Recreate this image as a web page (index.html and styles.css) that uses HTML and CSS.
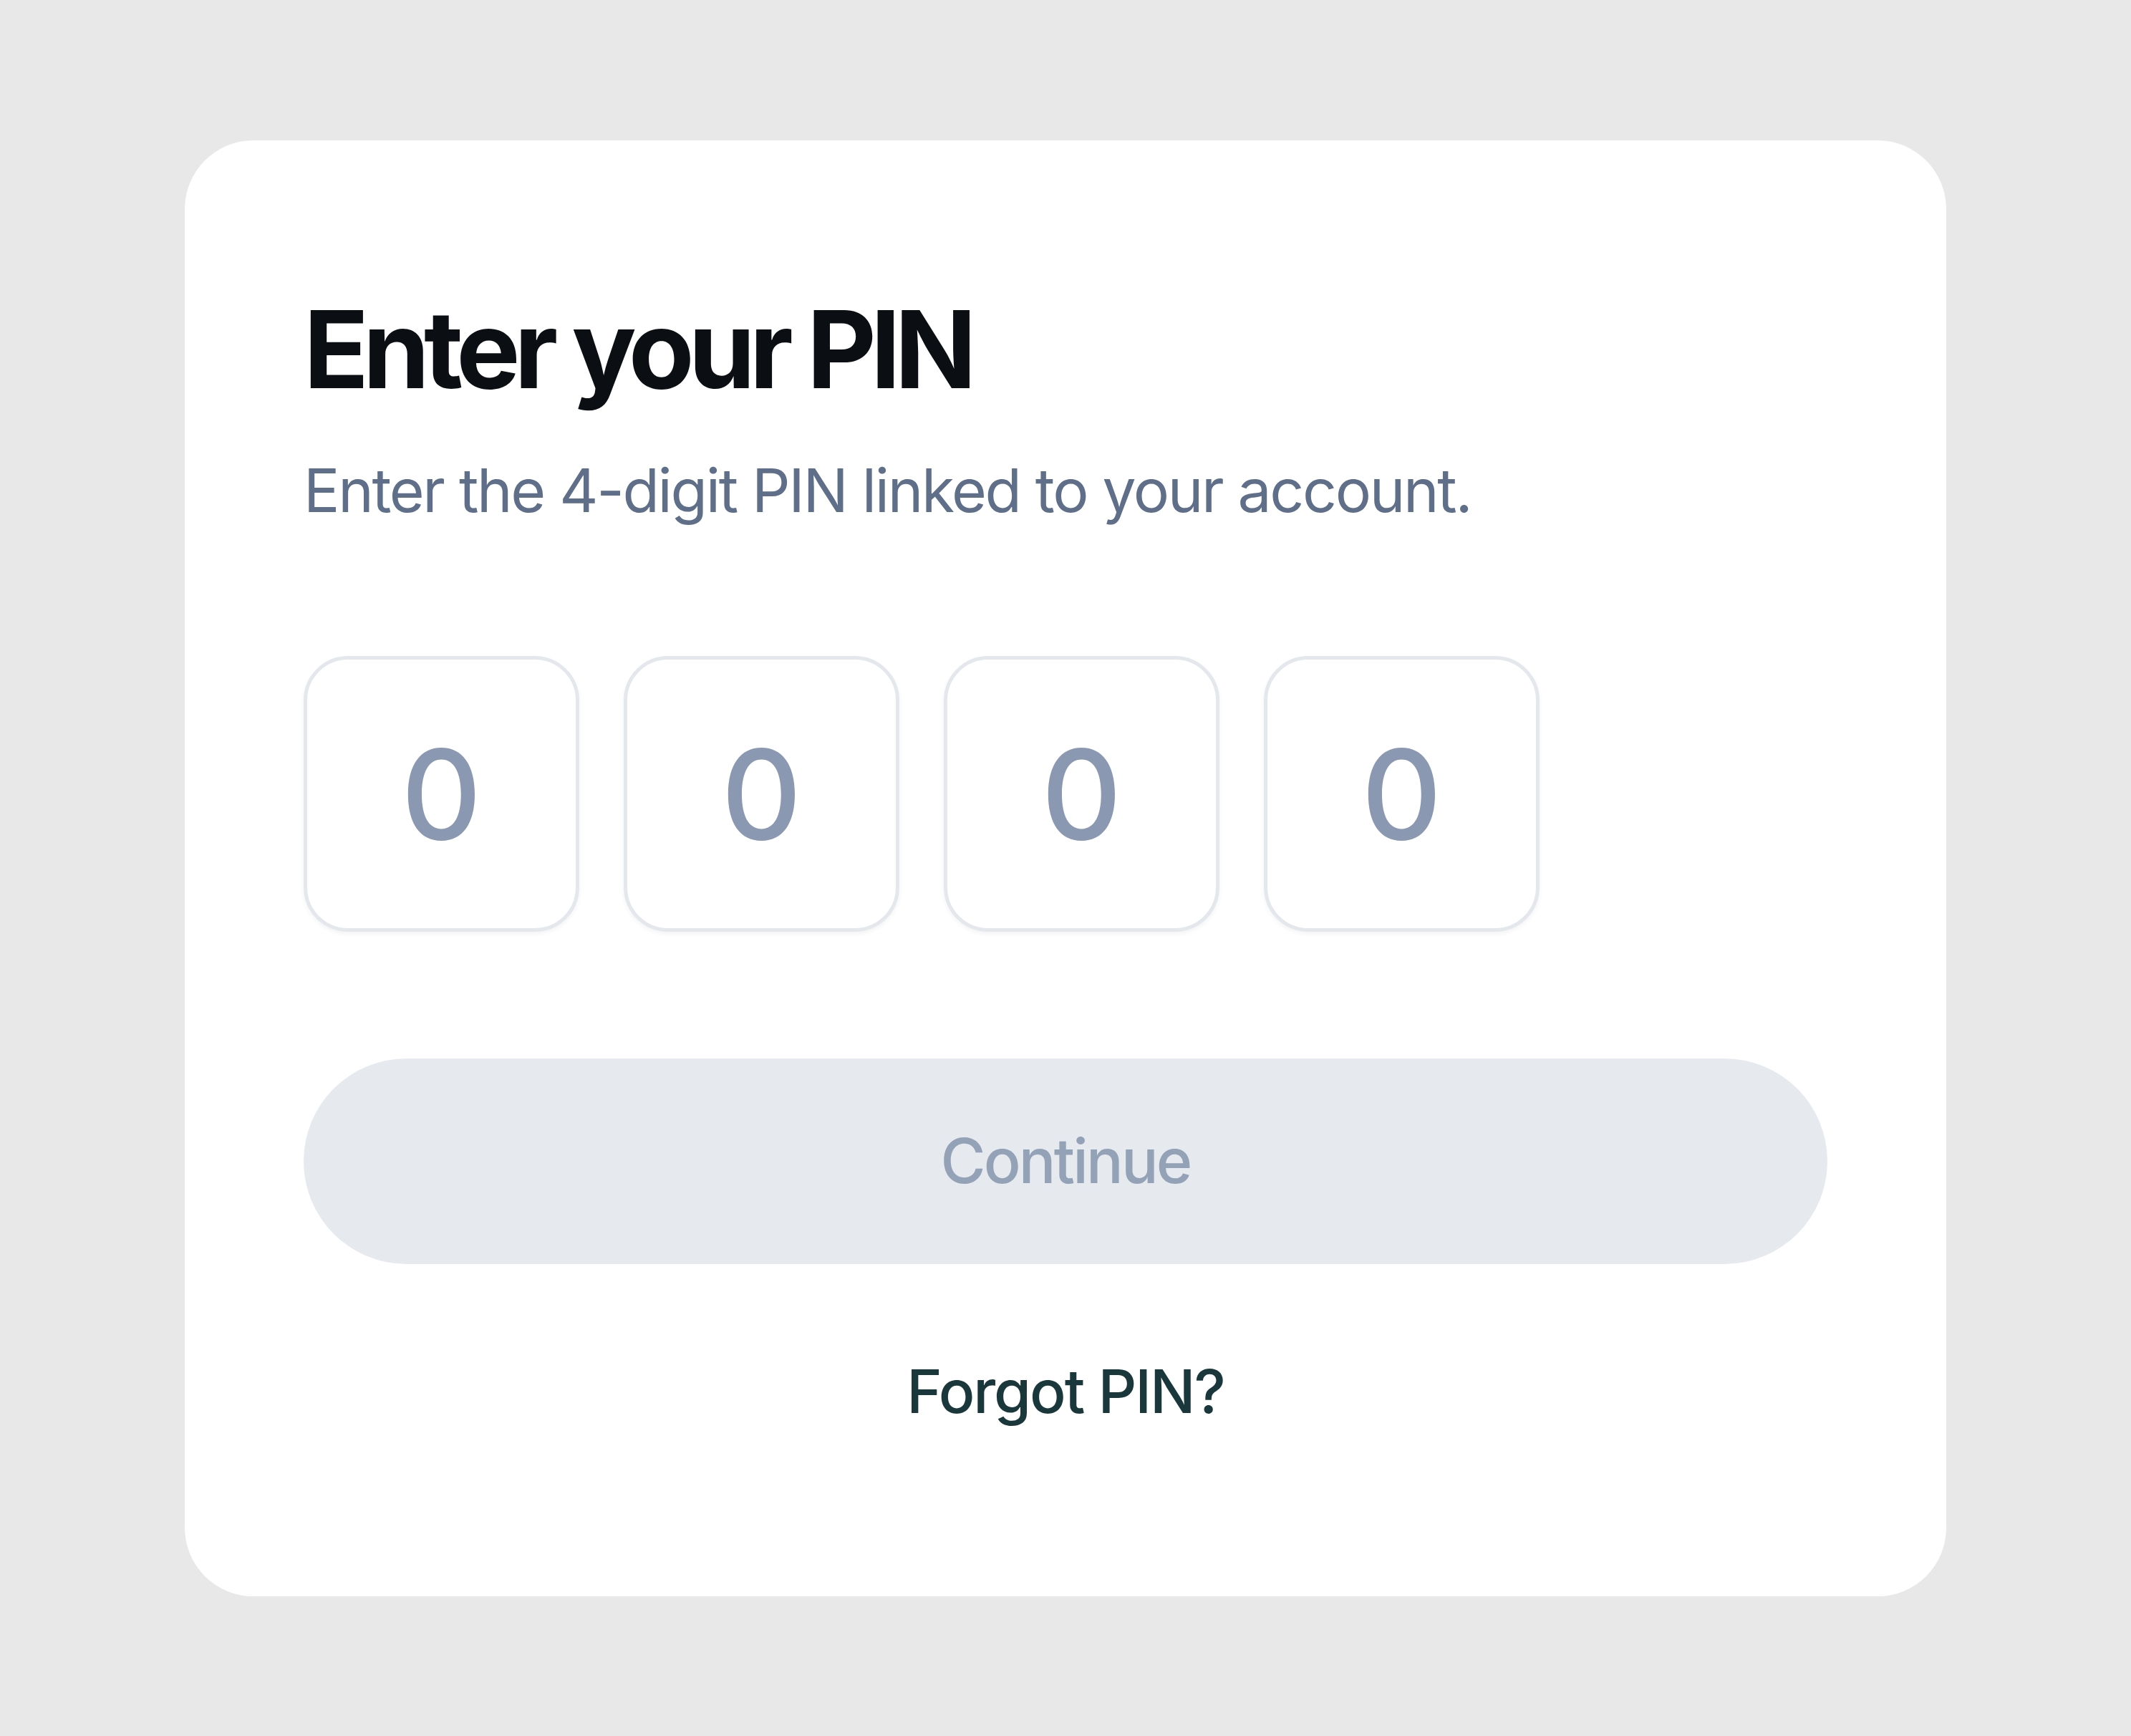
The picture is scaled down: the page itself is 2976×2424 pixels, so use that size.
FILE: index.html
```html
<!DOCTYPE html>
<html lang="en">
<head>
<meta charset="utf-8">
<title>Enter your PIN</title>
<link rel="stylesheet" href="styles.css">
</head>
<body>
<main class="card">
  <h1 class="title">Enter your PIN</h1>
  <p class="subtitle">Enter the 4-digit PIN linked to your account.</p>
  <div class="pin-row">
    <div class="pin-box">0</div>
    <div class="pin-box">0</div>
    <div class="pin-box">0</div>
    <div class="pin-box">0</div>
  </div>
  <button class="continue" type="button" disabled>Continue</button>
  <a class="forgot" href="#">Forgot PIN?</a>
</main>
</body>
</html>
```
FILE: styles.css
```css
* { box-sizing: border-box; }
html, body { margin: 0; padding: 0; }
body {
  width: 2976px;
  height: 2424px;
  background: #e8e8e8;
  font-family: Inter, "Noto Sans", sans-serif;
  display: flex;
  align-items: center;
  justify-content: center;
}
.card {
  width: 2460px;
  height: 2033px;
  background: #ffffff;
  border-radius: 96px;
  padding: 202px 166px 0 166px;
  display: flex;
  flex-direction: column;
  align-items: stretch;
}
.title {
  margin: 0;
  font-size: 150px;
  line-height: 180px;
  font-weight: 700;
  color: #0b0e12;
  letter-spacing: -0.055em;
}
.subtitle {
  margin: 47px 0 0 0;
  font-size: 84px;
  line-height: 120px;
  font-weight: 400;
  color: #5f6e89;
  letter-spacing: -0.028em;
}
.pin-row {
  margin-top: 171px;
  display: flex;
  gap: 62px;
}
.pin-box {
  width: 385px;
  height: 385px;
  border: 5px solid #e4e7ec;
  border-radius: 62px;
  background: #ffffff;
  box-shadow: 0 3px 6px rgba(15, 23, 42, 0.05);
  display: flex;
  align-items: center;
  justify-content: center;
  font-size: 174px;
  font-weight: 500;
  color: #8a98b2;
}
.continue {
  margin-top: 177px;
  height: 287px;
  width: 100%;
  border: none;
  border-radius: 144px;
  background: #e6e9ee;
  color: #94a2b8;
  font-family: inherit;
  font-size: 86px;
  font-weight: 500;
  letter-spacing: -0.033em;
}
.forgot {
  margin-top: 118px;
  align-self: center;
  font-size: 84px;
  line-height: 120px;
  font-weight: 500;
  color: #1a373b;
  text-decoration: none;
  letter-spacing: -0.025em;
}
```
